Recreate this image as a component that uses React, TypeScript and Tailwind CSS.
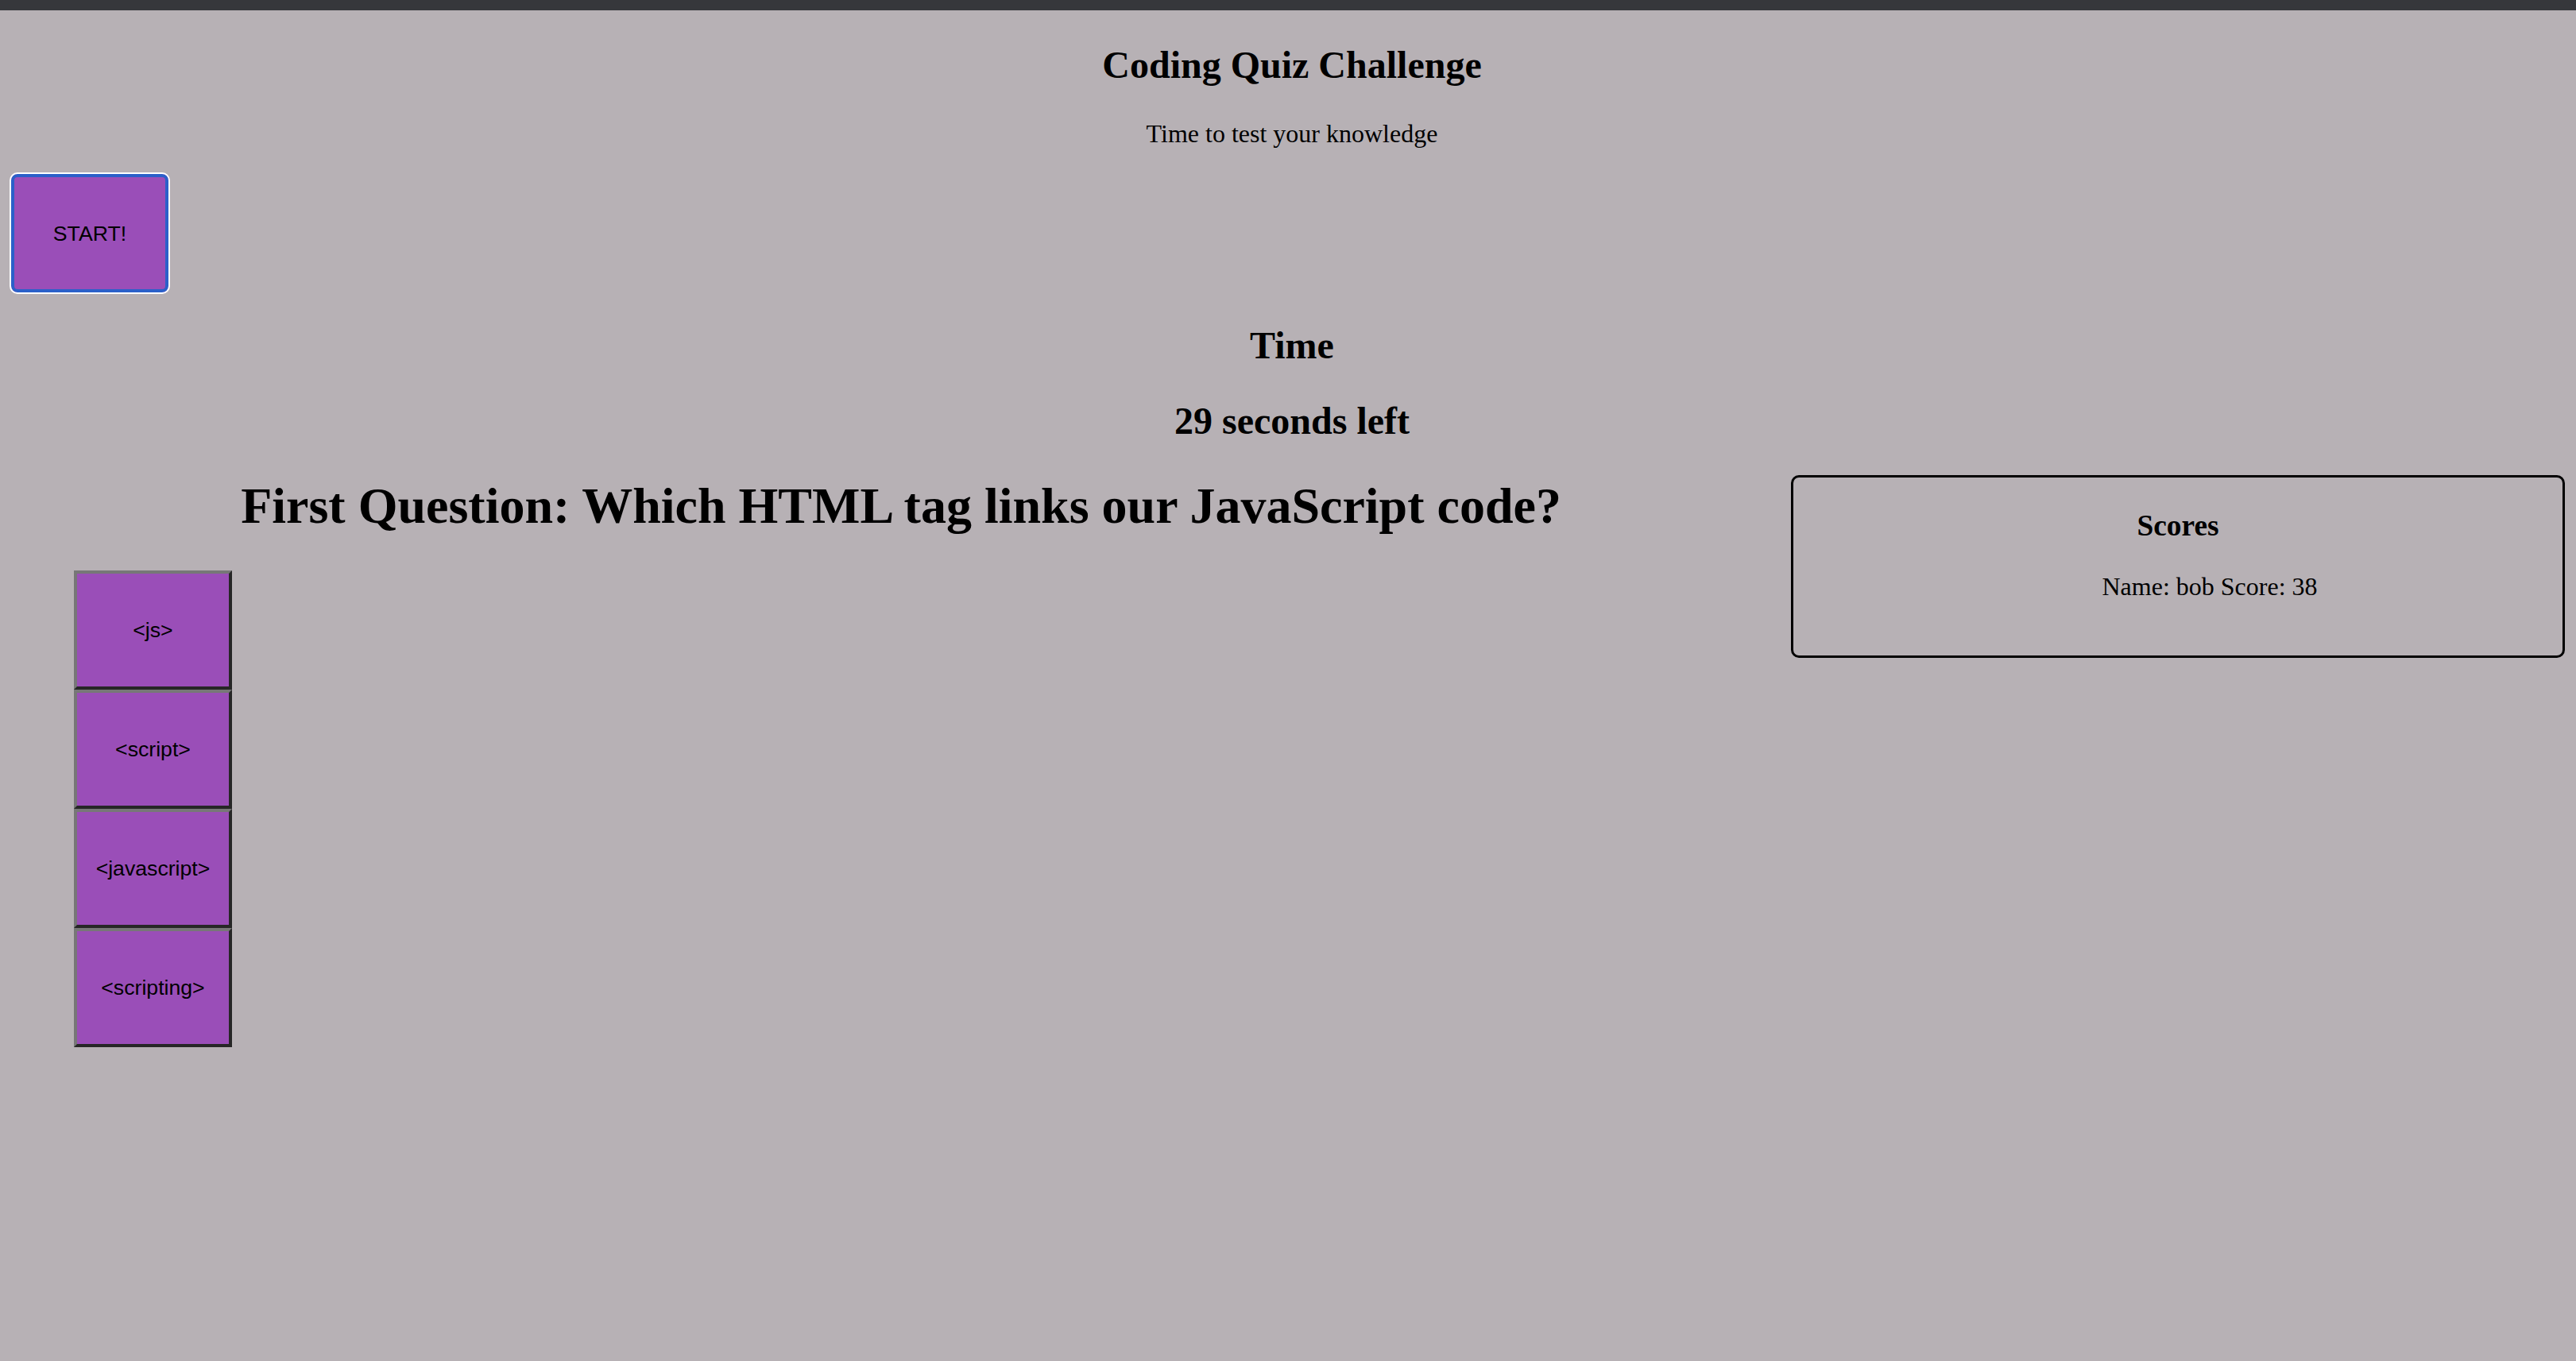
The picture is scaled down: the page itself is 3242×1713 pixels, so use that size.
import React from "react";

const answers = ["<js>", "<script>", "<javascript>", "<scripting>"];

export default function App() {
  return (
    <div className="min-h-screen w-full bg-[#b7b1b5] font-['Liberation_Serif',serif] text-black">
      <div className="h-[13px] bg-[#36373b]" />

      <h2 className="mt-[42px] pl-[10px] text-center text-[48px] font-bold leading-[53px]">
        Coding Quiz Challenge
      </h2>
      <p className="mt-[42px] pl-[10px] text-center text-[32px] leading-[36px]">
        Time to test your knowledge
      </p>

      <div className="mt-[31px] pl-[12px]">
        <button className="flex h-[153px] w-[202px] items-center justify-center rounded-[10px] border-2 border-white bg-[#9a4eb8] font-['Liberation_Sans',sans-serif] text-[26.67px] text-black shadow-[inset_0_0_0_4px_#2b60c9]">
          START!
        </button>
      </div>

      <h2 className="mt-[38px] pl-[10px] text-center text-[48px] font-bold leading-[53px]">
        Time
      </h2>
      <h2 className="mt-[42px] pl-[10px] text-center text-[48px] font-bold leading-[53px]">
        29 seconds left
      </h2>

      <div className="mt-[42px] flex px-[14px]">
        <div className="flex-1">
          <h1 className="mt-[3px] text-center text-[64px] font-bold leading-[71px]">
            First Question: Which HTML tag links our JavaScript code?
          </h1>
          <div className="mt-[46px] ml-[79px] flex flex-col">
            {answers.map((a) => (
              <button
                key={a}
                className="flex h-[150px] w-[199px] items-center justify-center border-[4px] border-t-[#777777] border-l-[#777777] border-b-[#262626] border-r-[#262626] bg-[#9a4eb8] font-['Liberation_Sans',sans-serif] text-[26.67px] text-black"
              >
                {a}
              </button>
            ))}
          </div>
        </div>

        <div className="h-[230px] w-[974px] shrink-0 rounded-[10px] border-[3px] border-black">
          <h3 className="mt-[40px] text-center text-[37.4px] font-bold leading-[41px]">
            Scores
          </h3>
          <ul className="mt-[38px] list-none pl-[80px]">
            <li className="text-center text-[32px] leading-[36px]">
              Name: bob Score: 38
            </li>
          </ul>
        </div>
      </div>
    </div>
  );
}
